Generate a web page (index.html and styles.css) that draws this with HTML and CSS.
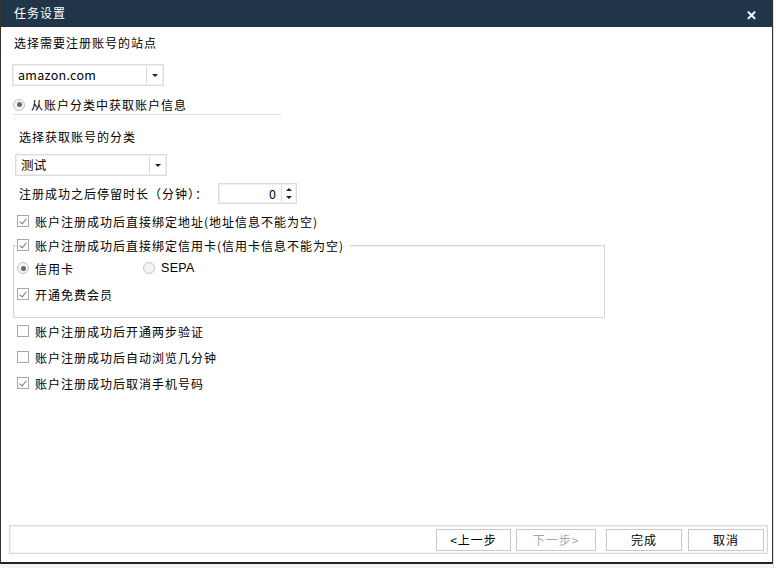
FILE: index.html
```html
<!DOCTYPE html>
<html>
  <head>
    <title>任务设置</title>
    <link rel="stylesheet" href="styles.css">
  </head>
  <body>
    <div class="screen">
      <div class="dialog">
        <div class="titlebar">
          <span class="title">任务设置</span>
          <span class="close">&#x2715;</span>
        </div>

        <div class="content">
          <div class="row label-site">选择需要注册账号的站点</div>

          <div class="select select-site">
            <span class="select-text">amazon.com</span>
            <span class="select-btn"><i class="arrow"></i></span>
          </div>

          <div class="row radio-row source-row">
            <span class="radio on"></span>
            <span>从账户分类中获取账户信息</span>
          </div>

          <div class="row label-cat">选择获取账号的分类</div>

          <div class="select select-cat">
            <span class="select-text">测试</span>
            <span class="select-btn"><i class="arrow"></i></span>
          </div>

          <div class="duration">
            <span>注册成功之后停留时长（分钟）：</span>
            <div class="spin">
              <span class="spin-value">0</span>
              <span class="spin-btns">
                <i class="up"></i>
                <i class="down"></i>
              </span>
            </div>
          </div>

          <div class="row check-row addr-row">
            <span class="check on"></span>
            <span>账户注册成功后直接绑定地址(地址信息不能为空)</span>
          </div>

          <fieldset class="group">
            <legend class="check-row">
              <span class="check on"></span>
              <span>账户注册成功后直接绑定信用卡(信用卡信息不能为空)</span>
            </legend>
            <div class="row radio-line">
              <span class="radio-item">
                <span class="radio on"></span>
                <span>信用卡</span>
              </span>
              <span class="radio-item sepa">
                <span class="radio"></span>
                <span>SEPA</span>
              </span>
            </div>
            <div class="row check-row member-row">
              <span class="check on"></span>
              <span>开通免费会员</span>
            </div>
          </fieldset>

          <div class="row check-row after-group">
            <span class="check"></span>
            <span>账户注册成功后开通两步验证</span>
          </div>
          <div class="row check-row">
            <span class="check"></span>
            <span>账户注册成功后自动浏览几分钟</span>
          </div>
          <div class="row check-row">
            <span class="check on"></span>
            <span>账户注册成功后取消手机号码</span>
          </div>
        </div>

        <div class="footer">
          <button class="btn btn-prev">&lt;上一步</button>
          <button class="btn btn-next" disabled>下一步&gt;</button>
          <button class="btn btn-finish">完成</button>
          <button class="btn btn-cancel">取消</button>
        </div>
      </div>
      <div class="side"></div>
    </div>
  </body>
</html>
```

FILE: styles.css
```css
body {
  margin: 0;
  background-color: #f4f4f4;
  font-family: "Noto Sans CJK SC", "Liberation Sans", sans-serif;
  font-size: 12px;
  letter-spacing: 1px;
  color: #000;
}

.screen {
  display: flex;
  width: 776px;
  height: 568px;
  overflow: hidden;
}

.side {
  flex: 1;
  background-color: #fff;
  border-left: 1px solid #e2e2e2;
}

.dialog {
  width: 771px;
  height: 562px;
  display: flex;
  flex-direction: column;
  background-color: #fff;
  border-left: 1px solid #333;
  border-right: 1px solid #333;
  border-bottom: 2px solid #222;
}

.titlebar {
  height: 27px;
  flex: none;
  display: flex;
  align-items: center;
  justify-content: space-between;
  background-color: #203548;
  color: #fff;
  padding: 0 14px 0 13px;
}

.title {
  font-size: 12px;
  margin-top: -3px;
}

.close {
  font-size: 13px;
  font-weight: bold;
  margin-top: 2px;
}

.content {
  flex: 1;
  padding: 6px 0 0 0;
}

.row {
  display: flex;
  align-items: center;
  height: 18px;
}

.label-site {
  margin-left: 13px;
}

/* combo boxes */
.select {
  display: flex;
  height: 20px;
  border: 1px solid #dcdcdc;
  box-shadow: inset 0 0 0 1px #f0f0f0;
}

.select-site {
  width: 150px;
  margin: 13px 0 0 11px;
}

.select-cat {
  width: 150px;
  margin: 9px 0 0 14px;
}

.select-text {
  flex: 1;
  padding-left: 5px;
  line-height: 20px;
  font-size: 12.5px;
  letter-spacing: 0.3px;
}

.select-btn {
  width: 15px;
  border-left: 1px solid #dcdcdc;
  display: flex;
  align-items: center;
  justify-content: center;
  margin: 1px 1px 1px 0;
  background-color: #fff;
}

.arrow {
  width: 0;
  height: 0;
  border-left: 3px solid transparent;
  border-right: 3px solid transparent;
  border-top: 3px solid #222;
}

/* radio + checkbox */
.radio {
  width: 10px;
  height: 10px;
  border: 1px solid #c4c4c4;
  border-radius: 50%;
  background-color: #f3f3f3;
  display: inline-flex;
  align-items: center;
  justify-content: center;
  margin-right: 6px;
  flex: none;
}

.radio.on::after {
  content: "";
  width: 5px;
  height: 5px;
  border-radius: 50%;
  background-color: #6a6a6a;
}

.check {
  width: 10px;
  height: 10px;
  border: 1px solid #a8a8a8;
  background-color: #fff;
  margin-right: 6px;
  flex: none;
  position: relative;
}

.check.on::after {
  content: "";
  position: absolute;
  left: 3px;
  top: 1px;
  width: 3px;
  height: 6px;
  border-right: 1px solid #777;
  border-bottom: 1px solid #777;
  transform: rotate(40deg);
}

.source-row {
  margin: 9px 0 0 12px;
  width: 268px;
  height: 19px;
  border-bottom: 1px solid #e0e0e0;
}

.label-cat {
  margin: 12px 0 0 18px;
}

.duration {
  display: flex;
  align-items: center;
  margin: 7px 0 0 18px;
}

.spin {
  display: flex;
  width: 77px;
  height: 19px;
  border: 1px solid #dcdcdc;
  box-shadow: inset 0 0 0 1px #f0f0f0;
  margin-left: 10px;
}

.spin-value {
  flex: 1;
  text-align: right;
  padding-right: 4px;
  line-height: 19px;
  font-size: 12.5px;
}

.spin-btns {
  width: 13px;
  margin: 1px 1px 1px 0;
  border-left: 1px solid #dcdcdc;
  display: flex;
  flex-direction: column;
  align-items: center;
  justify-content: space-around;
}

.up {
  border-left: 3px solid transparent;
  border-right: 3px solid transparent;
  border-bottom: 3px solid #222;
}

.down {
  border-left: 3px solid transparent;
  border-right: 3px solid transparent;
  border-top: 3px solid #222;
}

.check-row {
  display: flex;
  align-items: center;
}

.addr-row {
  margin: 8px 0 0 16px;
}

/* group box */
.group {
  box-sizing: border-box;
  width: 592px;
  height: 82px;
  margin: 6px 0 0 12px;
  padding: 0 3px;
  border: 1px solid #d6d6d6;
  box-shadow: inset 1px 1px 0 #f4f4f4;
}

.group legend {
  padding: 0 6px 0 0;
  margin-left: 0;
  height: 18px;
}

.radio-line {
  margin-top: 5px;
}

.radio-item {
  display: inline-flex;
  align-items: center;
  width: 126px;
}

.sepa {
  font-family: "Liberation Sans", sans-serif;
  font-size: 12.5px;
  letter-spacing: 0.3px;
}

.member-row {
  margin-top: 8px;
}

.after-group {
  margin: 4px 0 0 16px;
}

.after-group ~ .check-row {
  margin: 8px 0 0 16px;
}

/* footer */
.footer {
  flex: none;
  display: flex;
  justify-content: flex-end;
  align-items: center;
  height: 27px;
  margin: 0 4px 8px 8px;
  padding-right: 3px;
  border: 1px solid #dadada;
  box-shadow: inset 0 0 0 1px #f2f2f2;
}

.btn {
  height: 22px;
  padding: 0;
  background-color: #fff;
  border: 1px solid #c8c8c8;
  font-family: "Noto Sans CJK SC", sans-serif;
  font-size: 12px;
  letter-spacing: 1px;
  color: #000;
}

.btn-prev {
  width: 75px;
}

.btn-next {
  width: 80px;
  margin-left: 5px;
}

.btn[disabled] {
  color: #a8a8a8;
}

.btn-finish {
  width: 76px;
  margin-left: 10px;
}

.btn-cancel {
  width: 76px;
  margin-left: 6px;
}
```
